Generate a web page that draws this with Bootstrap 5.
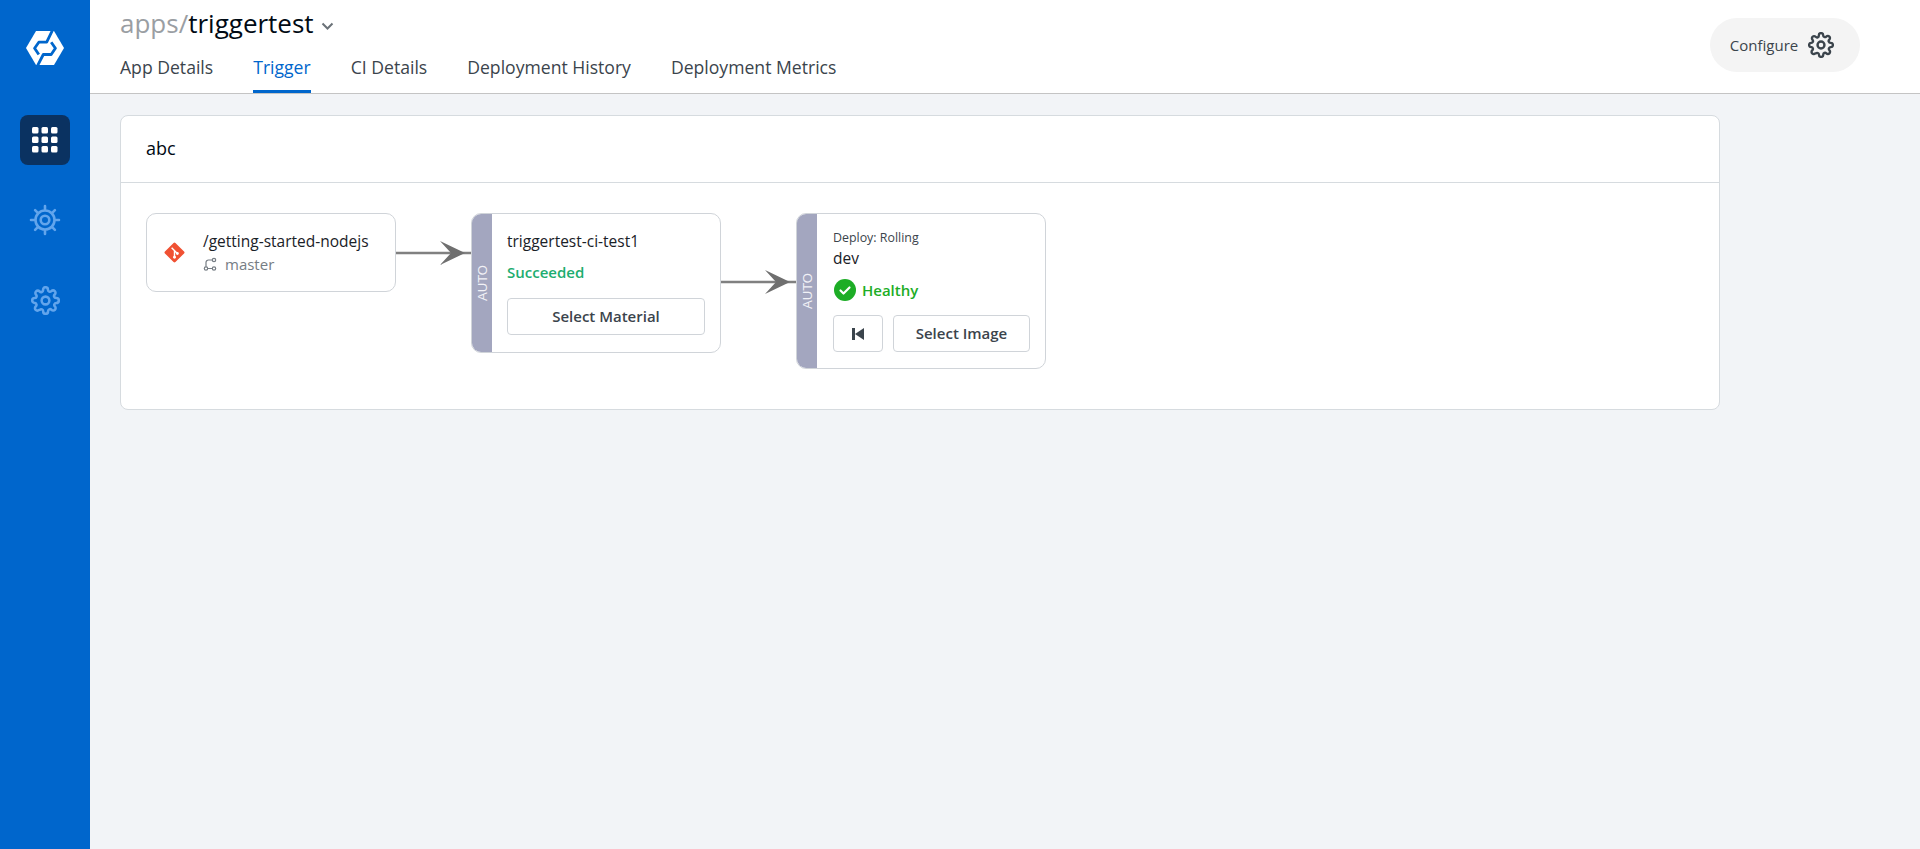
<!DOCTYPE html>
<html lang="en">
<head>
<meta charset="utf-8">
<title>Trigger</title>
<link href="https://cdn.jsdelivr.net/npm/bootstrap@5.3.0/dist/css/bootstrap.min.css" rel="stylesheet">
<style>
html,body{height:100%}
body{font-family:"Open Sans","Liberation Sans",sans-serif;background:#f2f4f7;color:#000a14;overflow:hidden}
.rail{width:90px;background:#0066cc;flex:none;padding-top:31px}
.rail-logo{height:34px;margin-bottom:50px;display:flex}
.rail-item{width:50px;height:50px;border-radius:8px;margin-bottom:30px}
.rail-item.on{background:#0a3261}
.page-head{height:94px;background:#fff;border-bottom:1px solid #c4c4c4;padding:0 60px 0 30px}
.app-title{font-size:26px;line-height:34px;padding-top:6px;color:#000a14;margin:0;font-weight:400}
.app-title span{color:#9a9ea3}
.tabs-row{gap:40px;margin-top:15px}
.tabs-row a{font-size:17.6px;line-height:24px;padding-bottom:11px;color:#3b444c;text-decoration:none;display:block;border-bottom:3px solid transparent}
.tabs-row a.on{color:#0066cc;border-bottom-color:#0066cc}
.cfg-pill{width:150px;height:54px;border-radius:27px;background:#f4f4f4;color:#3b444c;font-size:15px;gap:10px;margin-top:18px;border:0;padding:0 6px 0 0}
.flow-card{width:1600px;margin:21px 0 0 30px;height:295px;border:1px solid #d6dbdf;border-radius:8px;background:#fff}
.flow-head{height:67px;border-bottom:1px solid #d6dbdf;padding:0 25px 2px;font-size:18px;display:flex;align-items:center;color:#000a14}
.flow-body{position:relative;height:226px}
.edges{position:absolute;left:0;top:0}
.node{position:absolute;width:250px;background:#fff;border:1px solid #d0d4d9;border-radius:10px;overflow:hidden}
.strip{position:absolute;left:0;top:0;bottom:0;width:20px;background:#a3a6bf;display:flex;align-items:center;justify-content:center}
.strip span{writing-mode:vertical-rl;transform:rotate(180deg);font:13px "Liberation Sans",sans-serif;color:#f1f1f6}
.n-name{font-size:15.5px;line-height:20px;color:#1a2127}
.n-sub{font-size:15px;line-height:20px;color:#767d84}
.n-small{font-size:12.4px;line-height:16px;color:#3b444c}
.stat{font-size:15px;font-weight:600;line-height:20px}
.btn-cd{height:37px;background:#fff;border:1px solid #d0d4d9;border-radius:4px;font-size:15px;font-weight:600;color:#3b444c;padding:0;display:flex;align-items:center;justify-content:center}
.btn-cd:hover{background:#fff;color:#3b444c;border-color:#d0d4d9}
</style>
</head>
<body>
<div class="d-flex h-100">
  <nav class="rail d-flex flex-column align-items-center">
    <div class="rail-logo">
      <svg width="38" height="34" viewBox="0 0 38 34"><path fill="#fff" d="M10 0h18l10 17-10 17H10L0 17z"/><path fill="none" stroke="#0066cc" stroke-width="2.800" stroke-linejoin="round" d="M26.600-1 20.700 11.200H12.800L8.600 17.200l4.200 6.300M11.400 35l5.900-11.500h7.900l4.200-6.300-4.200-6"/></svg>
    </div>
    <div class="rail-item on d-flex align-items-center justify-content-center">
      <svg width="26" height="26" viewBox="0 0 26 26" fill="#fff"><rect x="0" y="0" width="6.500" height="6.500" rx="1.500"/><rect x="9.500" y="0" width="6.500" height="6.500" rx="1.500"/><rect x="19" y="0" width="6.500" height="6.500" rx="1.500"/><rect x="0" y="9.500" width="6.500" height="6.500" rx="1.500"/><rect x="9.500" y="9.500" width="6.500" height="6.500" rx="1.500"/><rect x="19" y="9.500" width="6.500" height="6.500" rx="1.500"/><rect x="0" y="19" width="6.500" height="6.500" rx="1.500"/><rect x="9.500" y="19" width="6.500" height="6.500" rx="1.500"/><rect x="19" y="19" width="6.500" height="6.500" rx="1.500"/></svg>
    </div>
    <div class="rail-item d-flex align-items-center justify-content-center">
      <svg width="32" height="32" viewBox="0 0 32 32" fill="none" stroke="#62a5ec" stroke-width="2.600"><circle cx="16" cy="16" r="9.500"/><circle cx="16" cy="16" r="4.300"/><path stroke-linecap="round" d="M16 2v3M16 27v3M2 16h3M27 16h3M6.100 6.100l2.200 2.200M23.700 23.700l2.200 2.200M25.900 6.100l-2.200 2.200M8.300 23.700l-2.200 2.200"/></svg>
    </div>
    <div class="rail-item d-flex align-items-center justify-content-center">
      <svg width="29" height="29" viewBox="0 0 24 24" fill="none" stroke="#62a5ec" stroke-width="2.100" stroke-linecap="round" stroke-linejoin="round"><circle cx="12" cy="12" r="3.200"/><path d="M19.400 15a1.650 1.650 0 0 0 .33 1.820l.06.06a2 2 0 1 1-2.830 2.830l-.06-.06a1.650 1.650 0 0 0-2.800 1.170V21a2 2 0 1 1-4 0v-.09A1.650 1.650 0 0 0 7.300 19.730l-.6.06a2 2 0 1 1-2.830-2.830l.06-.06A1.650 1.650 0 0 0 3.300 14H3a2 2 0 1 1 0-4h.09A1.650 1.650 0 0 0 4.270 7.300l-.06-.06A2 2 0 1 1 7.040 4.410l.06.06A1.650 1.650 0 0 0 10 3.300V3a2 2 0 1 1 4 0v.09a1.650 1.650 0 0 0 2.800 1.180l.06-.06a2 2 0 1 1 2.830 2.830l-.06.06A1.650 1.650 0 0 0 20.700 10H21a2 2 0 1 1 0 4h-.09a1.650 1.650 0 0 0-1.510 1z"/></svg>
    </div>
  </nav>
  <main class="flex-grow-1">
    <header class="page-head d-flex justify-content-between">
      <div>
        <h1 class="app-title"><span>apps/</span>triggertest <svg width="15" height="14" viewBox="0 0 14 14" fill="none" stroke="#6b7278" stroke-width="2"><path d="M2 4.500l5 5 5-5"/></svg></h1>
        <div class="tabs-row d-flex">
          <a href="#">App Details</a>
          <a href="#" class="on">Trigger</a>
          <a href="#">CI Details</a>
          <a href="#">Deployment History</a>
          <a href="#">Deployment Metrics</a>
        </div>
      </div>
      <button class="cfg-pill d-flex align-items-center justify-content-center">Configure
        <svg width="26" height="26" viewBox="0 0 24 24" fill="none" stroke="#3b444c" stroke-width="2.200" stroke-linecap="round" stroke-linejoin="round"><circle cx="12" cy="12" r="3.200"/><path d="M19.400 15a1.650 1.650 0 0 0 .33 1.820l.06.06a2 2 0 1 1-2.830 2.830l-.06-.06a1.650 1.650 0 0 0-2.800 1.170V21a2 2 0 1 1-4 0v-.09A1.650 1.650 0 0 0 7.300 19.730l-.6.06a2 2 0 1 1-2.830-2.830l.06-.06A1.650 1.650 0 0 0 3.300 14H3a2 2 0 1 1 0-4h.09A1.650 1.650 0 0 0 4.270 7.300l-.06-.06A2 2 0 1 1 7.040 4.410l.06.06A1.650 1.650 0 0 0 10 3.300V3a2 2 0 1 1 4 0v.09a1.650 1.650 0 0 0 2.800 1.180l.06-.06a2 2 0 1 1 2.830 2.830l-.06.06A1.650 1.650 0 0 0 20.700 10H21a2 2 0 1 1 0 4h-.09a1.650 1.650 0 0 0-1.510 1z"/></svg>
      </button>
    </header>
    <section class="flow-card">
      <div class="flow-head">abc</div>
      <div class="flow-body">
        <svg class="edges" width="1598" height="226" viewBox="0 0 1598 226">
          <g fill="none" stroke="#808080" stroke-width="2.500"><path d="M275 70h76"/><path d="M600 99h75"/></g>
          <path fill="#6f6f6f" d="M319 58l25 12-25 12 11-12z"/>
          <path fill="#6f6f6f" d="M644 87l25 12-25 12 11-12z"/>
        </svg>
        <div class="node" style="left:25px;top:30px;height:79px">
          <svg class="position-absolute" style="left:17px;top:28px" width="21" height="21" viewBox="0 0 22 22"><path fill="#f05133" d="M10 1 1 10a1.400 1.400 0 0 0 0 2l9 9a1.400 1.400 0 0 0 2 0l9-9a1.400 1.400 0 0 0 0-2l-9-9a1.400 1.400 0 0 0-2 0z"/><path fill="none" stroke="#fff" stroke-width="1.500" d="M8 6l6 6M11 9v7"/><circle cx="11" cy="16" r="1.500" fill="#fff"/><circle cx="14" cy="12" r="1.500" fill="#fff"/></svg>
          <div class="position-absolute n-name text-nowrap" style="left:56px;top:17px">/getting-started-nodejs</div>
          <div class="position-absolute n-sub d-flex align-items-center text-nowrap" style="left:56px;top:40px">
            <svg class="me-2" width="14" height="14" viewBox="0 0 14 14" fill="none" stroke="#767d84" stroke-width="1.200"><circle cx="3" cy="11.500" r="1.700"/><circle cx="11" cy="11.500" r="1.700"/><circle cx="11" cy="3" r="1.700"/><path d="M3 9.800V5.500a2.500 2.500 0 0 1 2.500-2.500h3.800M4.700 11.500h4.600"/></svg>master</div>
        </div>
        <div class="node" style="left:350px;top:30px;height:140px">
          <div class="strip"><span>AUTO</span></div>
          <div class="position-absolute n-name text-nowrap" style="left:35px;top:17px">triggertest-ci-test1</div>
          <div class="position-absolute stat text-nowrap" style="left:35px;top:48px;color:#1dad70">Succeeded</div>
          <button class="btn-cd position-absolute" style="left:35px;top:84px;width:198px">Select Material</button>
        </div>
        <div class="node" style="left:675px;top:30px;height:156px">
          <div class="strip"><span>AUTO</span></div>
          <div class="position-absolute n-small text-nowrap" style="left:36px;top:16px">Deploy: Rolling</div>
          <div class="position-absolute n-name text-nowrap" style="left:36px;top:34px">dev</div>
          <div class="position-absolute stat d-flex align-items-center text-nowrap" style="left:37px;top:65px;color:#1dad26;gap:6px">
            <svg width="22" height="22" viewBox="0 0 22 22"><circle cx="11" cy="11" r="11" fill="#1dad26"/><path fill="none" stroke="#fff" stroke-width="2.200" stroke-linecap="round" stroke-linejoin="round" d="M6.500 11.500l3 3 6-6"/></svg>Healthy</div>
          <button class="btn-cd position-absolute" style="left:36px;top:101px;width:50px" aria-label="Rollback"><svg width="12" height="12" viewBox="0 0 12 12" fill="#3b444c"><rect x="0" y="0" width="3" height="12"/><path d="M12 0v12L3 6z"/></svg></button>
          <button class="btn-cd position-absolute" style="left:96px;top:101px;width:137px">Select Image</button>
        </div>
      </div>
    </section>
  </main>
</div>
<script src="https://cdn.jsdelivr.net/npm/bootstrap@5.3.0/dist/js/bootstrap.bundle.min.js"></script>
</body>
</html>
